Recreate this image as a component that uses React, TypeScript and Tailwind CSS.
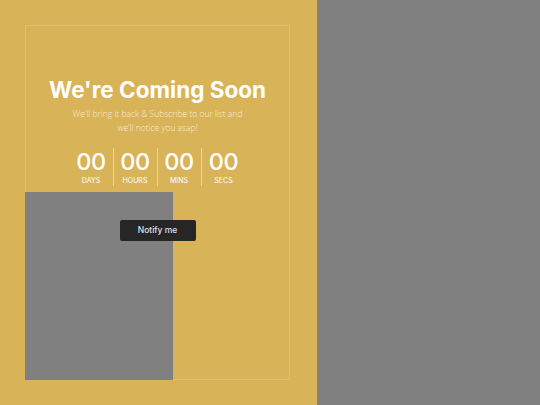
import React from "react";

const units = ["DAYS", "HOURS", "MINS", "SECS"];

export default function App() {
  return (
    <div className="flex w-[540px] h-[405px] overflow-hidden bg-[#808080]">
      <div className="relative w-[317px] h-[405px] bg-[#d9b358] pt-[25px] pl-[25px] pr-[27px] pb-[25px]">
        <div className="h-[355px] border border-[#e0bf6c] flex flex-col items-center pt-[50px]">
          <h1
            className="text-white text-[22.5px] font-bold leading-[28px] tracking-[0px]"
            style={{ fontFamily: 'Inter, sans-serif' }}
          >
            We're Coming Soon
          </h1>
          <p
            className="mt-[3px] text-[#f8edd2] text-[8.5px] leading-[13.5px] text-center font-light w-[200px]"
            style={{ fontFamily: '"Open Sans", sans-serif' }}
          >
            We'll bring it back &amp; Subscribe to our list and
            <br />
            we'll notice you asap!
          </p>
          <div className="mt-[14px] flex">
            {units.map((u, i) => (
              <div
                key={u}
                className={`w-[44px] flex flex-col items-center ${i < 3 ? "border-r border-[#ecd49a]" : ""}`}
              >
                <div
                  className="text-white text-[23.5px] leading-[27px] font-medium tracking-[-0.3px]"
                  style={{ fontFamily: 'Inter, sans-serif' }}
                >
                  00
                </div>
                <div
                  className="text-white text-[7px] leading-[10px] mt-[1px]"
                  style={{ fontFamily: 'Inter, sans-serif' }}
                >
                  {u}
                </div>
              </div>
            ))}
          </div>
          <button
            className="mt-[34px] w-[76px] h-[21px] rounded-[2px] bg-[#262626] text-[#e0e0e0] text-[8.5px] font-medium z-10"
            style={{ fontFamily: 'Inter, sans-serif' }}
          >
            Notify me
          </button>
        </div>
        <div className="absolute left-[25px] top-[192px] w-[148px] h-[188px] bg-[#808080]" />
      </div>
    </div>
  );
}
